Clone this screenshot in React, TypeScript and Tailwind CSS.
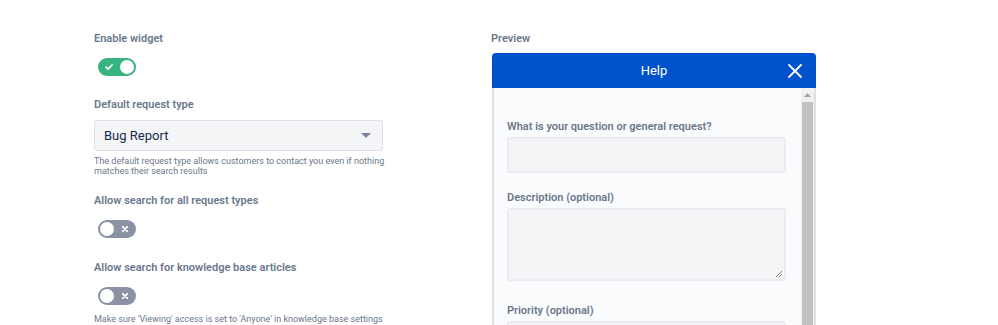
import React from 'react';

const font = { fontFamily: 'Roboto, "Noto Sans", Arial, sans-serif' };

function Toggle({ on }: { on: boolean }) {
  return (
    <div
      className={`w-[38px] h-[18px] rounded-full flex items-center justify-between px-[2px] ${
        on ? 'bg-[#36b37e]' : 'bg-[#8993a4]'
      }`}
    >
      {on ? (
        <>
          <svg width="14" height="14" viewBox="0 0 14 14" className="ml-[2px]">
            <path d="M4 7.2l2 2 4-4.2" stroke="#fff" strokeWidth="1.8" fill="none" strokeLinecap="round" strokeLinejoin="round" />
          </svg>
          <span className="w-[14px] h-[14px] rounded-full bg-white" />
        </>
      ) : (
        <>
          <span className="w-[14px] h-[14px] rounded-full bg-white" />
          <svg width="14" height="14" viewBox="0 0 14 14" className="mr-[2px]">
            <path d="M4.8 4.8l4.4 4.4M9.2 4.8l-4.4 4.4" stroke="#fff" strokeWidth="1.8" strokeLinecap="round" />
          </svg>
        </>
      )}
    </div>
  );
}

function Label({ children }: { children: React.ReactNode }) {
  return <div className="text-[11px] leading-4 font-semibold text-[#6b778c]">{children}</div>;
}

export default function App() {
  return (
    <div className="w-[998px] h-[325px] overflow-hidden bg-white flex" style={font}>
      {/* Settings column */}
      <div className="ml-[94px] w-[289px] pt-[31px] flex flex-col">
        <Label>Enable widget</Label>
        <div className="mt-[11px] ml-[4px]">
          <Toggle on />
        </div>
        <div className="mt-[21px]">
          <Label>Default request type</Label>
        </div>
        <div className="mt-[7px] h-[33px] rounded-[3px] border border-[#dfe1e6] bg-[#f4f5f7] flex items-center justify-between pl-[9px] pr-[11px]">
          <span className="text-[13px] text-[#172b4d]">Bug Report</span>
          <svg width="10" height="6" viewBox="0 0 10 6">
            <path d="M0 0h10L5 5z" fill="#7a869a" />
          </svg>
        </div>
        <div className="mt-[5px] text-[9px] leading-[10px] text-[#6b778c] whitespace-nowrap">
          The default request type allows customers to contact you even if nothing
          <br />
          matches their search results
        </div>
        <div className="mt-[17px]">
          <Label>Allow search for all request types</Label>
        </div>
        <div className="mt-[11px] ml-[4px]">
          <Toggle on={false} />
        </div>
        <div className="mt-[22px]">
          <Label>Allow search for knowledge base articles</Label>
        </div>
        <div className="mt-[11px] ml-[4px]">
          <Toggle on={false} />
        </div>
        <div className="mt-[9px] text-[9px] leading-[11px] text-[#6b778c] whitespace-nowrap">
          Make sure 'Viewing' access is set to 'Anyone' in knowledge base settings
        </div>
      </div>

      {/* Preview column */}
      <div className="ml-[108px] pt-[31px] flex flex-col">
        <Label>Preview</Label>
        <div className="mt-[6px] ml-[1px] w-[324px] flex flex-col">
          <div className="h-[35px] bg-[#0052cc] rounded-t-[4px] flex items-center justify-center relative">
            <span className="text-[13px] text-white">Help</span>
            <svg width="14" height="14" viewBox="0 0 14 14" className="absolute right-[14px] top-[11px]">
              <path d="M1 1l12 12M13 1L1 13" stroke="#fff" strokeWidth="1.8" strokeLinecap="round" />
            </svg>
          </div>
          <div className="flex bg-[#fafbfc] border-x-2 border-[#dfe1e6] h-[300px]">
            <div className="flex-1 pl-[13px] pr-[15px] pt-[31px] flex flex-col">
              <Label>What is your question or general request?</Label>
              <div className="mt-[2px] h-[36px] rounded-[3px] border-2 border-[#ebecf0] bg-[#f4f5f7]" />
              <div className="mt-[17px]">
                <Label>Description (optional)</Label>
              </div>
              <div className="mt-[2px] h-[73px] rounded-[3px] border-2 border-[#ebecf0] bg-[#f4f5f7] flex items-end justify-end pr-[1px] pb-[1px]">
                <svg width="9" height="9" viewBox="0 0 9 9">
                  <path d="M8 2L2 8M8 5L5 8" stroke="#888" strokeWidth="1" />
                </svg>
              </div>
              <div className="mt-[22px]">
                <Label>Priority (optional)</Label>
              </div>
              <div className="mt-[2px] h-[36px] rounded-[3px] border-2 border-[#ebecf0] bg-[#f4f5f7]" />
            </div>
            <div className="w-[13px] flex flex-col bg-[#f1f1f1]">
              <div className="h-[14px] flex items-center justify-center">
                <svg width="7" height="4" viewBox="0 0 7 4">
                  <path d="M0 4L3.5 0 7 4z" fill="#a3a3a3" />
                </svg>
              </div>
              <div className="mx-[1px] flex-1 bg-[#c1c1c1]" />
            </div>
          </div>
        </div>
      </div>
    </div>
  );
}
